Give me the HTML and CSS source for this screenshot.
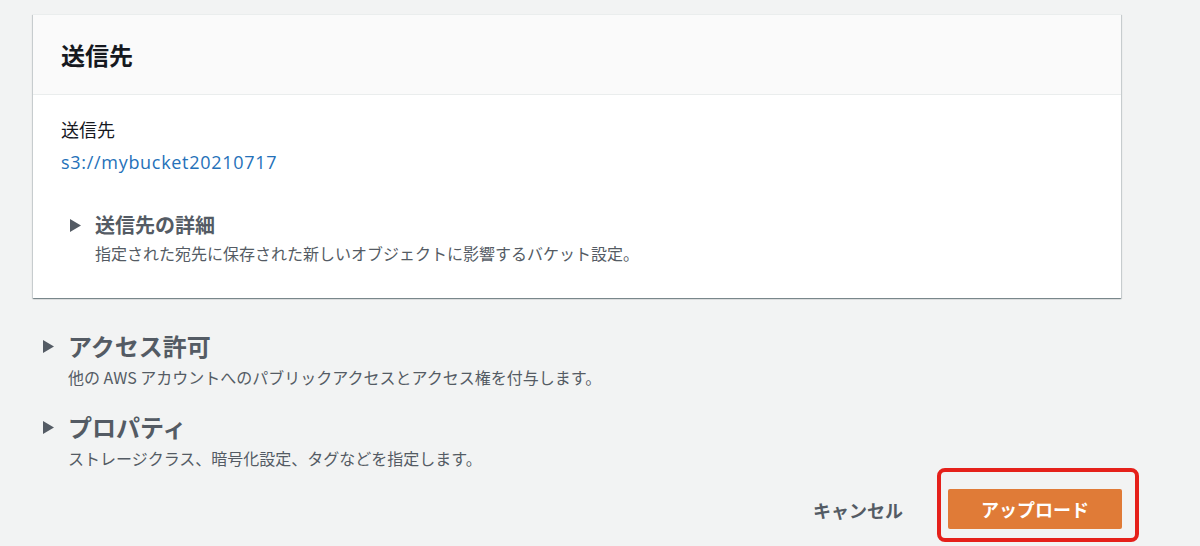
FILE: index.html
```html
<!DOCTYPE html>
<html lang="ja">
<head>
<meta charset="utf-8">
<link rel="stylesheet" href="styles.css">
</head>
<body>
<div class="page">
  <div class="card">
    <div class="card-header"><h2 class="card-title">送信先</h2></div>
    <div class="card-body">
      <div class="label">送信先</div>
      <a class="link" href="#">s3://mybucket20210717</a>
      <div class="expander inner">
        <div class="exp-head">
          <svg class="caret" width="11" height="13" viewBox="0 0 11 13"><path d="M0 0 L11 6.5 L0 13 Z" fill="#545b64"/></svg>
          <span class="exp-title small">送信先の詳細</span>
        </div>
        <div class="exp-desc small-desc">指定された宛先に保存された新しいオブジェクトに影響するバケット設定。</div>
      </div>
    </div>
  </div>

  <div class="sections">
    <div class="expander outer first">
      <div class="exp-head">
        <svg class="caret big" width="11" height="13" viewBox="0 0 11 13"><path d="M0 0 L11 6.5 L0 13 Z" fill="#545b64"/></svg>
        <span class="exp-title large">アクセス許可</span>
      </div>
      <div class="exp-desc">他の AWS アカウントへのパブリックアクセスとアクセス権を付与します。</div>
    </div>
    <div class="expander outer second">
      <div class="exp-head">
        <svg class="caret big" width="11" height="13" viewBox="0 0 11 13"><path d="M0 0 L11 6.5 L0 13 Z" fill="#545b64"/></svg>
        <span class="exp-title large">プロパティ</span>
      </div>
      <div class="exp-desc">ストレージクラス、暗号化設定、タグなどを指定します。</div>
    </div>
  </div>

  <div class="footer">
    <button class="btn-cancel">キャンセル</button>
    <div class="highlight">
      <button class="btn-primary">アップロード</button>
    </div>
  </div>
</div>
</body>
</html>
```

FILE: styles.css
```css
* { box-sizing: border-box; }
html, body {
  margin: 0;
  padding: 0;
  background: #f2f3f3;
  font-family: "Noto Sans CJK JP", "Noto Sans", sans-serif;
  color: #16191f;
}
.page {
  padding: 14px 0 0 33px;
  width: 1200px;
  height: 546px;
  overflow: hidden;
}
.card {
  width: 1088px;
  background: #fff;
  box-shadow: 0 1px 1px 0 rgba(0, 28, 36, 0.35), 1px 1px 1px 0 rgba(0, 28, 36, 0.12), -1px 1px 1px 0 rgba(0, 28, 36, 0.12);
  border-top: 1px solid #eaeded;
}
.card-header {
  height: 80px;
  background: #fafafa;
  border-bottom: 1px solid #eaeded;
  display: flex;
  align-items: center;
  padding: 0 28px;
}
.card-title {
  margin: 0;
  font-size: 24px;
  font-weight: 700;
  line-height: 30px;
  color: #16191f;
}
.card-body {
  padding: 22px 28px 34px;
}
.label {
  font-size: 18px;
  line-height: 24px;
  color: #16191f;
}
.link {
  display: block;
  margin-top: 9px;
  font-family: "Open Sans", "Noto Sans", sans-serif;
  font-size: 18px;
  line-height: 24px;
  letter-spacing: 0.7px;
  color: #2571b9;
  text-decoration: none;
}
.expander.inner {
  margin-top: 38px;
  padding-left: 9px;
}
.exp-head {
  display: flex;
  align-items: center;
}
.caret {
  flex: none;
  margin-right: 14px;
}
.exp-title {
  font-weight: 700;
  color: #545b64;
}
.exp-title.small {
  font-size: 20px;
  line-height: 26px;
}
.exp-desc {
  font-size: 16px;
  line-height: 20px;
  color: #545b64;
  margin-top: 6px;
  padding-left: 25px;
}
.exp-desc.small-desc {
  line-height: 22px;
  margin-top: 4px;
}
.sections {
  padding-left: 10px;
}
.expander.first { margin-top: 33px; }
.expander.second { margin-top: 25px; }
.caret.big { margin-right: 14px; }
.exp-title.large {
  font-size: 24px;
  line-height: 30px;
}
.footer {
  display: flex;
  justify-content: flex-end;
  align-items: center;
  gap: 34px;
  width: 1106px;
}
.btn-cancel {
  background: none;
  border: none;
  padding: 0;
  margin-top: 10px;
  font-family: inherit;
  font-size: 18px;
  font-weight: 700;
  color: #545b64;
}
.highlight {
  border: 4px solid #e5201a;
  border-radius: 8px;
  padding: 17px 13px 9px 7px;
}
.btn-primary {
  display: block;
  width: 174px;
  height: 40px;
  background: #e07b37;
  border: none;
  border-radius: 2px;
  color: #fff;
  font-family: inherit;
  font-size: 18px;
  font-weight: 700;
}
```
